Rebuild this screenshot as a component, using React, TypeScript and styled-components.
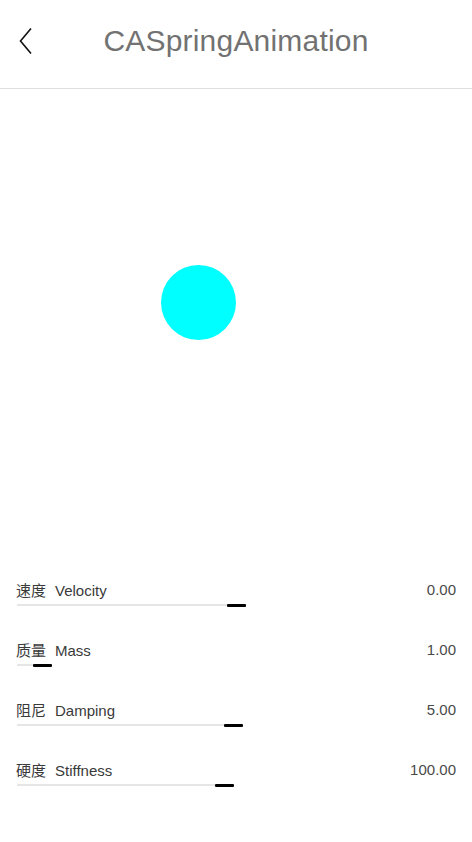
import React from "react";
import styled, { createGlobalStyle } from "styled-components";

const Global = createGlobalStyle`
  html, body { margin: 0; padding: 0; background: #ffffff; }
  body { font-family: "Liberation Sans", "Noto Sans CJK SC", sans-serif; }
`;

const Page = styled.div`
  width: 472px;
  height: 842px;
  display: flex;
  flex-direction: column;
  background: #ffffff;
`;

const Header = styled.header`
  height: 88px;
  border-bottom: 1px solid #dedede;
  display: grid;
  grid-template-columns: 60px 1fr 60px;
  align-items: center;
`;

const Back = styled.button`
  border: 0;
  background: none;
  padding: 0 0 0 18px;
  height: 40px;
  display: flex;
  align-items: center;
  margin-top: -6px;
`;

const Title = styled.h1`
  margin: 0 0 6px 0;
  text-align: center;
  font-family: "Liberation Sans", sans-serif;
  font-weight: 400;
  font-size: 30px;
  color: #727272;
  letter-spacing: 0.2px;
`;

const Stage = styled.div`
  height: 493px;
  padding: 176px 0 0 161px;
  box-sizing: border-box;
`;

const Ball = styled.div`
  width: 75px;
  height: 75px;
  border-radius: 50%;
  background: #00ffff;
`;

const Controls = styled.div`
  display: flex;
  flex-direction: column;
  gap: 35px;
  padding: 0 16px 0 16px;
`;

const Row = styled.div`
  display: flex;
  flex-direction: column;
  gap: 7px;
`;

const LabelLine = styled.div`
  display: flex;
  justify-content: space-between;
  align-items: center;
  height: 15px;
  font-size: 15px;
  color: #3a3a3a;
`;

const Cn = styled.span`
  font-family: "Noto Sans CJK SC", sans-serif;
  margin-right: 9px;
`;

const En = styled.span`
  font-family: "Liberation Sans", sans-serif;
`;

const Value = styled.span`
  font-family: "Liberation Sans", sans-serif;
  color: #4a4a4a;
`;

const Track = styled.div<{ $w: number }>`
  margin-left: 1px;
  width: ${(p) => p.$w}px;
  height: 3px;
  display: flex;
  align-items: flex-start;
`;

const Fill = styled.div`
  flex: 1;
  height: 2px;
  background: #e6e6e6;
`;

const Thumb = styled.div`
  width: 19px;
  height: 3px;
  background: #000000;
  border-radius: 1px;
`;

const rows = [
  { cn: "速度", en: "Velocity", value: "0.00", w: 229 },
  { cn: "质量", en: "Mass", value: "1.00", w: 35 },
  { cn: "阻尼", en: "Damping", value: "5.00", w: 226 },
  { cn: "硬度", en: "Stiffness", value: "100.00", w: 217 },
];

export default function App() {
  return (
    <Page>
      <Global />
      <Header>
        <Back aria-label="back">
          <svg width="16" height="28" viewBox="0 0 16 28">
            <path d="M13 1.5 L2.5 14 L13 26.5" fill="none" stroke="#111" strokeWidth="1.6" />
          </svg>
        </Back>
        <Title>CASpringAnimation</Title>
        <div />
      </Header>
      <Stage>
        <Ball />
      </Stage>
      <Controls>
        {rows.map((r) => (
          <Row key={r.en}>
            <LabelLine>
              <span>
                <Cn>{r.cn}</Cn>
                <En>{r.en}</En>
              </span>
              <Value>{r.value}</Value>
            </LabelLine>
            <Track $w={r.w}>
              <Fill />
              <Thumb />
            </Track>
          </Row>
        ))}
      </Controls>
    </Page>
  );
}
